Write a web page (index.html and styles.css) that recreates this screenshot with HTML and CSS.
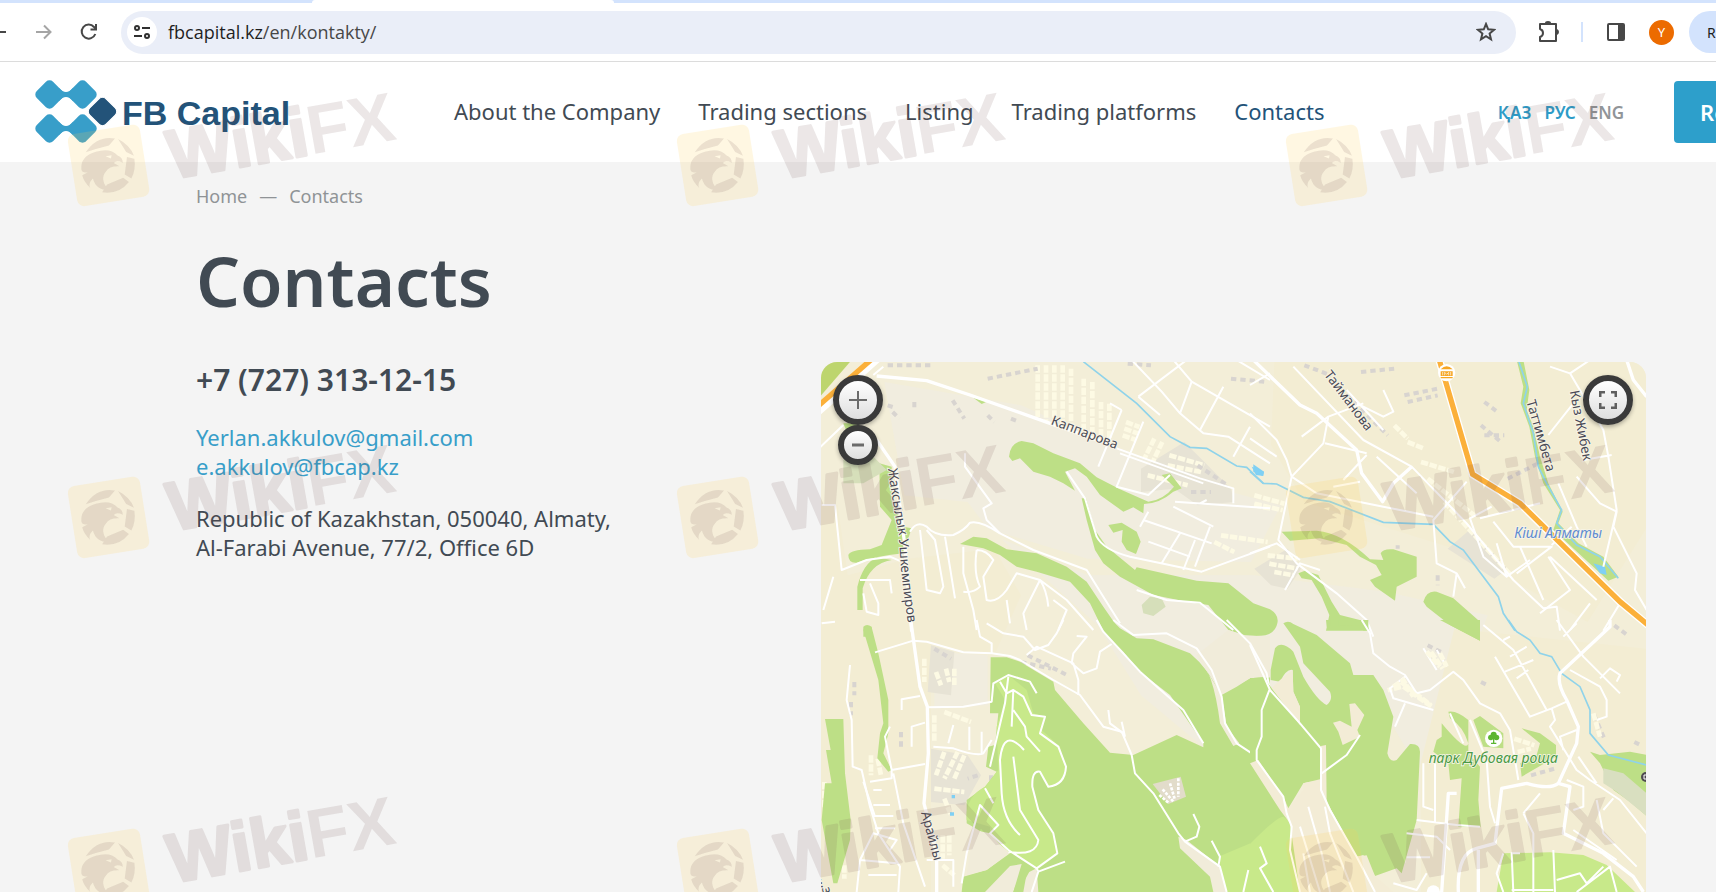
FILE: index.html
```html
<!DOCTYPE html>
<html lang="en">
<head>
  <meta charset="UTF-8" />
  <title>Contacts - FB Capital</title>
  <link rel="stylesheet" href="styles.css">
</head>
<body>
  <div class="browser">
    <div class="tabs"><span class="tab"></span></div>
    <div class="toolbar">
      <button class="tool back" aria-label="Back"><svg width="20" height="20" viewBox="0 0 20 20"><path d="M18 10H3M10 3L3 10L10 17" fill="none" stroke="#474747" stroke-width="2"/></svg></button>
      <button class="tool forward" aria-label="Forward"><svg width="20" height="20" viewBox="0 0 20 20"><path d="M2 10H16M10 3.500L16.500 10L10 16.500" fill="none" stroke="#a5a5a5" stroke-width="2"/></svg></button>
      <button class="tool reload" aria-label="Reload"><svg width="20" height="20" viewBox="0 0 20 20"><path d="M16.300 12A7 7 0 1 1 15 5L17 7.500" fill="none" stroke="#474747" stroke-width="2"/><path d="M18 2V8.500H11.500V6.500H16V2Z" fill="#474747"/></svg></button>
      <div class="address">
        <span class="site-info"><svg width="18" height="16" viewBox="0 0 18 16" fill="none" stroke="#303030" stroke-width="2"><circle cx="4" cy="4" r="2"/><path d="M9 4H17M1 12H9"/><circle cx="14" cy="12" r="2"/></svg></span>
        <span class="url">fbcapital.kz<span>/en/kontakty/</span></span>
        <button class="star" aria-label="Bookmark"><svg width="20" height="20" viewBox="0 0 20 20"><path d="M10 2L12.200 7.300L18 7.800L13.600 11.600L15 17.300L10 14.200L5 17.300L6.400 11.600L2 7.800L7.800 7.300Z" fill="none" stroke="#474747" stroke-width="2"/></svg></button>
      </div>
      <button class="tool puzzle" aria-label="Extensions"><svg width="24" height="24" viewBox="0 0 24 24"><path d="M4 4H20V21H4V17Q7 16 7 13T4 9Z" fill="none" stroke="#474747" stroke-width="2" stroke-linejoin="round"/><path d="M9 3Q9 1 12 1T15 3ZM21 9Q23 10 23 12T21 15Z" fill="#474747"/></svg></button>
      <span class="divider"></span>
      <button class="tool panel" aria-label="Side panel"><svg width="20" height="20" viewBox="0 0 20 20"><rect x="2" y="2" width="16" height="16" rx="1" fill="none" stroke="#474747" stroke-width="2"/><path d="M12 2H18V18H12Z" fill="#474747"/></svg></button>
      <span class="avatar">Y</span>
      <button class="update">R</button>
    </div>
  </div>

  <header class="header">
    <a href="#" class="logo" aria-label="FB Capital">
      <svg width="260" height="64" viewBox="0 0 260 64">
        <g fill="#389ec9">
          <rect x="3" y="3" width="23" height="23" rx="5" transform="rotate(45 14.500 14.500)"/>
          <rect x="36" y="3" width="23" height="23" rx="5" transform="rotate(45 47.500 14.500)"/>
          <rect x="3" y="37" width="23" height="23" rx="5" transform="rotate(45 14.500 48.500)"/>
          <rect x="36" y="37" width="23" height="23" rx="5" transform="rotate(45 47.500 48.500)"/>
          <path d="M24 8Q31 16 38 8V21Q31 13 24 21ZM24 42Q31 50 38 42V55Q31 47 24 55Z"/>
        </g>
        <rect x="56" y="20" width="23" height="23" rx="5" transform="rotate(45 67.500 31.500)" fill="#235379" stroke="#fff" stroke-width="1"/>
        <text x="87" y="45" class="logo-text">FB Capital</text>
      </svg>
    </a>
    <nav class="nav">
      <a href="#">About the Company</a>
      <a href="#">Trading sections</a>
      <a href="#">Listing</a>
      <a href="#">Trading platforms</a>
      <a href="#" class="active">Contacts</a>
    </nav>
    <div class="lang">
      <a href="#">ҚАЗ</a>
      <a href="#">РУС</a>
      <a href="#" class="current">ENG</a>
    </div>
    <button class="request">Re</button>
  </header>

  <main class="content">
    <div class="breadcrumbs"><a href="#">Home</a><span>—</span><span>Contacts</span></div>
    <h1>Contacts</h1>
    <div class="row">
      <div class="info">
        <div class="phone">+7 (727) 313-12-15</div>
        <div class="mails">
          <a href="mailto:Yerlan.akkulov@gmail.com">Yerlan.akkulov@gmail.com</a>
          <a href="mailto:e.akkulov@fbcap.kz">e.akkulov@fbcap.kz</a>
        </div>
        <p class="place">Republic of Kazakhstan, 050040, Almaty,<br>Al-Farabi Avenue, 77/2, Office 6D</p>
      </div>

      <div class="map">
        <svg class="map-canvas" viewBox="0 0 2475 1590" preserveAspectRatio="xMinYMin slice">
          <rect width="2475" height="1590" fill="#f3eed8"/>

          <!-- open land -->
          <g fill="#f1eddf">
            <path d="M190 60L600 130L900 260L1230 390L1380 430L1290 600L800 590L500 500L440 420L250 400Z"/>
            <path d="M540 530L800 640L1300 640L1700 690L2000 760L1930 950L1700 1100L1200 1200L960 1000L830 790Z"/>
            <path d="M10 800L130 790L190 1250L60 1250ZM340 870L500 880V1030L340 1040ZM220 1160H310V1330L250 1380Z"/>
            <path d="M1700 780L1940 1000L1900 1240L1780 1200L1600 900Z"/>
          </g>
          <!-- housing blocks -->
          <g fill="#f3edd3">
            <path d="M1360 0H2475V500L2300 780L1900 560L1450 420L1350 250Z"/>
            <path d="M1900 800L2475 860V1590H1800V1200Z"/>
            <path d="M0 430H50L80 640L260 590L520 560L600 700L520 880L330 850V1590H0Z"/>
          </g>
          <g fill="#e7e3d5">
            <path d="M960 320L1090 240L1230 380L1240 420L1130 430L1060 380L960 390ZM330 850L400 870L390 1000L320 990ZM330 1160L440 1180L480 1240L430 1330L330 1320Z"/>
            <path d="M1300 620L1400 560L1440 620L1400 680L1350 670ZM1880 560L1950 500L2060 620L2020 650Z"/>
          </g>

          <!-- building rows -->
          <g class="blocks">
            <path d="M650 10V165M675 10V180M700 10V190M725 10V200M750 20V210M788 50V220M814 60V225M840 120V235M865 125V240"/>
            <path d="M915 180L955 195M910 200L950 214M905 220L945 234M1000 230L970 290M1024 240L995 300M1045 280L1150 310M1040 310L1140 330M980 340L1100 370M1180 540L1240 570M1200 520L1340 540M1300 430L1350 440"/>
            <path d="M1300 400L1390 425M1300 425L1385 445M1340 580L1430 590M1345 605L1430 620M1360 630L1420 640M1720 190L1760 230M1760 240L1810 260M1800 300L1900 330M1870 420L2070 640M1820 350L1960 460"/>
            <path d="M310 890V960M345 930L360 970M375 920L385 960M400 920V970M340 1060V1140M370 1050L450 1080M370 1170L345 1240M410 1170L370 1250M430 1180L400 1250M340 1280L430 1290M370 1310L390 1360M365 1420V1490M385 1420V1480M365 1510L400 1540"/>
            <path d="M150 1180V1240M170 1190L180 1240M1740 960L1830 1030M1740 975L1700 985M1830 870L1865 920M2080 1130L2140 1150M2090 1170L2130 1160M10 1260V1340M70 1510V1550"/>
          </g>
          <g class="houses">
            <path d="M200 130L215 135M215 150L235 170M280 120V140M395 115L430 170M500 160L520 180M570 170L595 180M200 10H330M1230 50L1340 60M1110 390H1170M1130 310L1220 370"/>
            <path d="M1450 10L1530 40M1620 30L1720 20M1750 100L1850 80M1760 120L1850 100M1980 190L2040 240M1990 220H2050M1580 100L1700 220M1990 120L2030 150M2060 350L2160 300"/>
            <path d="M100 960V1000M90 1020V1060M240 1110V1160M340 860L390 890M620 880L740 940M600 900L690 920M470 1240L440 1250M510 1240V1270M2320 1060L2350 1130M2440 1140L2460 1150M2380 790L2420 820M1980 960L2000 970M2130 1240L2200 1220M1820 850L1860 870M1730 550V560M1850 640V670M500 50L650 20M920 5L990 10"/>
          </g>

          <!-- north-west -->
          <g transform="translate(-3 -6)">
            <g class="park">
              <path fill="#bdd56e" d="M0 0H95L0 110Z"/>
              <path d="M567 290Q570 250 605 243L640 250L700 280L780 310L830 352L900 388L985 425Q1030 420 1062 380L1025 345L1050 340L1085 385L1060 395Q1020 430 972 432L970 460L940 442L910 455L840 405L800 350L765 325L735 335L765 392L730 370L690 350L640 335L600 295L577 303Z"/>
              <path d="M785 415L798 415L825 510L860 560L945 630L950 622L1130 662L1225 670L1300 730L1350 748Q1378 765 1372 790Q1365 828 1310 828L1275 826L1225 810L1165 735L1100 725L1000 705L900 650L850 610L825 570L800 480Z"/>
              <path d="M420 552L460 530L500 535L560 568L650 580L740 620L800 665L850 740L900 812H850L810 730L750 665L650 635L590 620L540 585L490 565Z"/>
              <path d="M865 495L905 488L950 515L962 545L948 582L920 570L905 545L908 510L880 518ZM460 113L500 125L485 132Z"/>
              <path d="M178 310L215 320L215 420L250 500L275 505L250 580Q160 590 110 608Q85 610 85 585Q90 570 150 568L185 555L215 480L180 440ZM215 600Q150 610 128 685V750H112V680Q130 610 170 592ZM70 190H115L135 215H80ZM130 800Q140 790 155 800V830H130Z"/>
              <path fill="#d6dfba" d="M965 735L990 710L1025 715L1037 740L1000 768L970 760ZM70 300L140 270L200 330L130 370H70Z"/>
            </g>
            <path class="river" d="M790 5L950 130L1050 230L1110 262L1160 265L1250 318L1280 322L1330 370"/>
            <path class="water" d="M1300 313L1332 335L1328 348L1300 335Z"/>
            <g class="road">
              <path d="M70 195L0 262M5 435H45L65 630L140 600L210 590L245 605M270 515Q290 480 320 500Q345 530 400 525Q435 510 450 488Q480 480 540 520L640 570L800 630L850 710L900 790"/>
              <path d="M300 510L320 690L360 700L370 680L345 540L320 510M375 530L405 715M430 560V640L460 750L470 810M470 570Q460 640 480 680Q460 700 430 695M470 570Q500 570 520 600L490 650L500 720Q530 730 560 690L590 640L660 660L740 720L820 810"/>
              <path d="M660 660L610 760L620 810M660 660Q680 690 685 740M560 720L570 790M700 720L740 750L715 810M160 45L190 20M435 280V320L515 430L490 445L500 480L540 520M120 660H210L215 700M130 700L140 755L175 765V730L150 670M5 790L45 785M40 650L10 750"/>
              <path d="M740 335L795 415L830 530Q850 570 930 590L1145 635L1350 560M950 690L1040 720L1140 728L1240 810M905 150L835 320M970 185L890 380L985 405L1050 345M870 130L905 150M890 265L1140 355L1240 385V430M900 280L1150 370M1065 425L1350 445M1140 430L1160 420M970 480L1175 550M985 545L1110 590M1060 440L1180 500M1080 520L1025 610M1125 540L1090 630M1170 500L1125 620M985 455L960 500"/>
              <path d="M955 110L1020 165M935 0L1025 95L1080 160L1150 220L1225 230L1350 310M1060 0L1115 65L1080 160M1100 0L955 110M1115 65L1350 200M1210 80L1140 210M1290 200L1240 290M1250 0L1350 60"/>
            </g>
            <path class="road wide" d="M170 48L320 62L450 105L690 190L890 260"/>
            <path class="road wide" d="M170 240L225 320L255 560L265 700L275 815"/>
            <path class="casing" d="M-10 158L190 -20"/><path class="highway" d="M-10 142L175 -20"/>
          </g>

          <!-- north-east -->
          <g transform="translate(1287 -6)">
            <g class="park">
              <path d="M95 515L200 512Q280 520 360 598L400 600L392 580Q400 565 430 568L500 590V650L440 680L435 722L375 680L360 660L395 645L378 615L330 590L290 555L210 535L120 542Z"/>
              <path d="M145 640L165 632L205 645L245 725L270 765L350 785L358 812H228L238 765L215 710L185 660L155 655ZM520 725Q530 690 560 695L610 715L690 785V842L600 795L530 740Z"/>
              <path d="M800 0H820L838 90L830 150L850 200L870 290L895 370L938 455L925 490L985 550L1060 590L1105 650L1075 662L910 510L930 450L880 370L855 290L838 200L812 130L820 80Z"/>
            </g>
            <path class="river" d="M0 335L40 370L80 372L160 412L240 425L400 487L550 493L600 545L640 570L700 650L745 710L760 760L795 812M805 0L832 80L820 130L850 220L865 320L890 370L935 450L920 490L980 555L1050 590L1105 655"/>
            <path class="water" d="M5 320L42 335L40 348L18 345ZM1030 610L1065 620L1070 645L1050 640Z"/>
            <g class="road">
              <path d="M0 75L60 40M0 160L80 240L110 300L125 350L85 540L140 610L260 700L350 780L370 830M0 235L80 290M125 350L220 250L235 170L340 130M130 20L340 240L485 320L650 490L790 660L880 745L920 740L930 812M125 350L200 400L400 440L550 470M290 90L400 210M400 90L430 155L400 170L320 130M155 230L235 170M225 250L350 280M350 285L280 360M380 290L500 400M250 380L330 365"/>
              <path d="M0 580L80 550L150 600M105 690L150 610L210 630M650 365L550 480L560 610L620 640L645 685M620 640L610 710M725 440L660 475L700 590L770 650L840 600M690 475L870 430M730 485L790 560L905 560L800 640M895 590L960 690L870 760M905 555L965 500M900 590L1040 720M810 560L880 720M770 650L740 550"/>
              <path d="M960 40L1060 210L1075 290L1100 450L1060 620M895 225L970 130M900 20L960 40L1020 0M925 370L980 500L1010 560M980 350L1050 430L1100 455L1090 500L1160 640L1155 690L1190 750M1000 300L1085 285M1020 730L960 810M1110 730L1060 812"/>
            </g>
            <path class="road wide" d="M10 0L150 135L200 160L320 270L335 340L398 425L430 370L485 320M1130 0L1150 60L1190 110"/>
            <path class="casing" d="M568 0L668 343L810 430L1110 725L1200 800"/>
            <path class="highway" d="M568 0L668 343L810 430L1110 725L1200 800"/>
            <circle cx="590" cy="38" r="26" fill="#fff"/>
            <path d="M572 28Q590 10 608 28ZM572 34H608V48H572ZM572 51H608V55H572Z" fill="#f6a623"/>
            <path d="M578 36V46M584 46V37L590 43L596 37V46M602 36V46" fill="none" stroke="#fff" stroke-width="2"/>
          </g>

          <!-- south-west -->
          <g transform="translate(-3 774)">
            <g class="park">
              <path d="M845 0H875L900 25L950 55L1000 58L1110 100Q1170 150 1200 225L1290 175L1350 172V816H425L430 770L500 750L570 700L540 670L510 650L440 610V540L495 500L530 455L498 440L505 380L525 375L535 280H510L512 112H560L600 125L700 185L705 210L790 310L870 398L940 405L1070 345L1150 382L1150 370L1050 225L960 155L910 95L850 35Z"/>
              <path d="M130 30Q135 12 155 22L175 100L205 240V340L190 400L215 450L205 455L172 415L180 340L190 310L175 180ZM15 297H70L75 460L92 600L90 660L52 790L40 790L5 600L15 490H35L18 390H32Z"/>
              <g class="golf">
                <path d="M525 190L565 165L620 210L640 280L675 290L665 330L720 380L738 450Q730 500 685 500L660 455H640L640 510L655 570L700 640L712 700L650 745L560 690L510 650V620L440 600Q435 530 495 500L535 450L530 320L555 240Z"/>
                <path d="M1195 710L1350 645V816H1215L1205 750Z"/>
              </g>
              <g fill="#f1ecda">
                <path d="M1205 225L1170 155L1130 105L1225 30L1275 47L1350 48V172L1290 175L1250 200ZM1130 105Q1180 150 1200 310L1240 378L1258 370L1220 320L1205 225ZM1290 432L1312 418L1350 460V515L1300 450ZM1075 650L1100 660L1200 740L1220 816H1180L1170 770L1080 685Z"/>
                <path d="M495 816L570 738L605 732L580 816ZM620 760L650 745L655 816H610ZM460 630L510 640L545 680L565 700L500 750L440 765Z"/>
              </g>
              <path fill="#e2dcca" d="M998 492L1082 470L1098 530L1045 552Z"/>
            </g>
            <path d="M1028 508L1060 545M1018 525L1045 548M1075 475V530M1050 490L1065 540" stroke="#fff" stroke-width="8" stroke-dasharray="9 4"/>
            <path class="water" d="M395 525H405V535H395ZM390 577H402V587H390Z"/>
            <g class="road">
              <path d="M165 97L280 62L320 65L430 97L515 100L570 108L600 120L700 180L780 225L850 320L905 335L935 405L945 460L1000 520L1075 640L1095 665L1200 740L1220 816M90 135L80 240L95 300L98 440L125 450L150 560L175 640L240 740L235 816M320 262L430 260L515 245L520 190L565 165L630 185L650 220M340 380L400 385Q470 410 490 400L515 360M245 270V238L300 228M215 450L315 432M150 485L215 475V450L195 350L210 320M220 460L250 610L315 800M275 380V320L315 308"/>
              <path d="M565 170L555 250L510 440M540 185L560 220L580 210L610 230L635 285L675 290L660 340L715 380L738 440Q735 495 685 500L660 455Q635 450 637 500L655 570L700 640L712 700L650 745L565 690L510 640L535 615L480 555L440 700L425 790M580 210L575 320M580 270L615 320L620 350L660 395M612 390Q550 320 540 420L545 520Q550 600 600 645M580 410L600 570L655 660Q650 710 565 695M495 505L520 550M650 745L655 755L735 725M655 755L635 816"/>
              <path d="M160 510H185M160 555H210M160 588H220M165 625H225M130 485L165 590M145 765H230M120 720L160 640L230 660L210 690M110 816L120 720L230 730M320 720H400V800M400 315L385 370M448 320V390M485 335V400M500 10L550 40L610 50L645 90L685 75L710 40L730 0M470 0L480 50L515 70V100M620 105L650 80L760 130L775 180V225M770 48L800 50L760 100L755 130L790 160L830 145L840 95L875 72M865 270L870 310L910 340M905 305L915 350"/>
              <path d="M830 0L850 35L960 155L1090 270L1150 370M880 0L940 45L1040 40L1130 85L1175 150L1205 230L1215 310L1250 370L1310 410L1350 460M1220 0L1290 70L1340 160L1350 210L1330 260L1315 415M1120 582L1138 620L1130 650L1095 665M1175 662L1200 710L1195 740M1285 750L1270 816M1320 680L1340 730L1325 745L1350 790"/>
            </g>
            <path class="road wide" d="M272 0L300 200L322 260L325 400L312 550L350 700V816"/>
            <path d="M615 745L585 800L580 816H595L628 755Z" class="park"/>
          </g>

          <!-- south-east -->
          <g transform="translate(1287 774)">
            <g class="park">
              <path d="M0 175L40 172L65 205L150 310L150 260L130 215L128 150Q110 145 90 185L62 180V150L75 85Q95 60 130 95L160 170Q200 240 230 255Q250 240 240 215L160 130L150 80L100 10Q115 0 130 12L200 45L300 130L310 165H370L400 210L430 290L412 400Q420 430 440 420L480 372Q510 370 510 395L500 600L455 760L440 745L375 768L340 705L320 710L230 545L210 478L160 490L115 565L125 610L150 816H0Z"/>
              <path d="M65 205L150 310L215 380L225 470L215 485H0V175L40 172ZM575 310Q650 400 655 370V400L690 440L685 540L692 620H625L635 475L600 480L595 430L550 395L560 360L575 350ZM595 275Q620 270 655 300V370Q640 320 600 295ZM670 300L690 288L760 340V385L700 380ZM815 325L870 340L918 375V410L815 470L810 430L860 405L870 370ZM570 0H690V62ZM1020 395L1050 405L1140 395L1190 405V588L1140 545L1090 510L1050 430ZM228 0H242V20H230ZM265 0H355V30L340 32V16L265 18Z"/>
              <g class="golf"><path d="M0 672Q80 590 100 590L125 610L120 690L150 816H0ZM760 700L900 697L1000 705L1070 735L1155 816H740Z"/></g>
              <g fill="#f3ecd6">
                <path d="M65 205L90 180L128 150L130 215L150 260V315ZM160 490L210 478L232 550L320 710L350 706L375 768L430 816H150L120 610L90 570L0 430L25 420L100 530L115 565L160 510ZM213 378L228 375L230 545L213 500ZM249 308L270 302L305 320L298 252L315 250L343 285L322 330L330 350L278 375L265 335Z"/>
              </g>
              <path fill="#d9dfc0" d="M1060 445L1120 460L1190 520V588L1100 515L1060 490Z"/>
            </g>
            <path class="river" d="M775 0L800 35L840 60L870 100L905 110L935 160L990 200L1020 270V340L1075 405L1190 435"/>
            <g class="road">
              <path d="M0 75L60 210L150 310L213 385V510L240 570L320 710L375 816M60 205L35 270V350L20 390V420L100 530L110 580L125 620L120 690L150 816M330 345L290 405L215 460M335 0L360 40L370 100L420 140L465 165L500 220L540 210L610 155L640 180L690 250L750 280L780 330L805 480M465 170L420 205L430 235L550 270M465 250L435 320M600 280L640 370M660 300L710 420L720 560L735 610M520 430V560L550 570M555 430V605M500 600L620 615L690 620M470 640L560 650L600 690M470 712H540"/>
              <path d="M700 15L790 90L890 270M735 110L840 290L905 265L950 245M765 155L850 120M780 110L830 80M760 60L780 50M800 175L835 150M905 265L915 300L900 320L980 450L1020 480L1110 540L1190 640M920 0L1000 110L1110 220M940 50L980 10M960 150L1050 200L1070 240V290L1040 300M1050 175L1080 145L1110 165L1100 185M980 330L930 350L940 390M985 410L1040 490M950 480L1000 500V560L970 570M1040 540L1060 640L1160 740M1060 570L1090 535M820 580L870 520M820 580L850 640L850 816M970 630L1100 720M790 816L785 700H810M910 690L915 816M920 780L990 760L1010 790L1060 740M980 816L1080 740L1100 816M150 620L210 816M175 560L215 700L240 816M225 560L240 640L310 816M160 700L180 816M785 810H910M430 790L500 810L530 760M30 680L50 730L30 745L70 816M760 816L740 760L760 700"/>
              <path d="M520 85L560 150M560 90L590 140"/>
            </g>
            <g class="blocks"><path d="M530 95L570 140M570 100L590 140M430 200L460 180L490 230M460 200L545 260M1030 280L1050 350"/></g>
            <g class="road wide">
              <path d="M1080 0V20L930 160Q920 190 950 240L985 320L980 370L925 490Q900 510 830 490L755 505L735 670L680 685Q620 700 625 816M620 520H595L575 816M925 490L960 500L940 640L1060 700L1150 770L1180 816M685 690V816"/>
            </g>
            <circle cx="550" cy="816" r="20" fill="#fff"/>
            <circle cx="731" cy="355" r="26" fill="#fff"/>
            <path d="M723 361Q714 361 714 352Q714 345 722 344Q722 335 731 335Q740 335 740 344Q748 345 748 352Q748 361 739 361Q735 361 733 358V368H739V372H723V368H729V358Q727 361 723 361Z" fill="#5cb531"/>
            <circle cx="1188" cy="471" r="15" fill="#4e4a50"/><path d="M1190 465H1182V477H1190" fill="none" stroke="#fff" stroke-width="3"/>
          </g>

          <path id="street" d="M201 320Q215 430 234 520Q238 640 262 790" fill="none"/>
          <g class="labels">
            <text transform="translate(688 186) rotate(21)">Каппарова</text>
            <text><textPath href="#street">Жаксылык Ушкемпиров</textPath></text>
            <text transform="translate(1508 38) rotate(53)">Тайманова</text>
            <text transform="translate(2116 118) rotate(74)">Таттимбета</text>
            <text transform="translate(2246 88) rotate(79)">Кыз Жибек</text>
            <text transform="translate(300 1352) rotate(75)">Арайлы</text>
            <text transform="translate(-6 1548) rotate(75)">...за</text>
            <text x="2080" y="527" class="river-name">Кіші Алматы</text>
            <text x="1823" y="1202" class="park-name">парк Дубовая роща</text>
          </g>
        </svg>
        <div class="zoom">
          <button class="zoom-in" aria-label="Zoom in"><svg width="18" height="18"><path d="M9 0V18M0 9H18" stroke="#6b6b6b" stroke-width="2"/></svg></button>
          <button class="zoom-out" aria-label="Zoom out"><svg width="12" height="12"><path d="M0 6H12" stroke="#6b6b6b" stroke-width="3"/></svg></button>
        </div>
        <button class="fullscreen" aria-label="Full screen"><svg width="18" height="18"><path d="M1 6V1H6M12 1H17V6M17 12V17H12M6 17H1V12" fill="none" stroke="#5f5f5f" stroke-width="3"/></svg></button>
      </div>
    </div>
  </main>

  <!-- repeated brand mark over the whole page -->
  <svg class="watermark" aria-hidden="true">
    <defs>
      <pattern id="mark" width="609" height="352" patternUnits="userSpaceOnUse" y="60">
        <g transform="translate(108 105) rotate(-9)">
          <rect x="-36" y="-36" width="73" height="73" rx="7" fill="#fad050" opacity=".17"/>
          <g opacity=".13" fill="#664545">
            <path d="M-20 -16Q-6 -31 11 -25L4 -19Q-8 -18 -20 -16ZM14 -24Q25 -16 27 -5L20 -10ZM27 -2Q27 9 21 17L15 12L20 -5ZM18 20Q6 31 -10 26L-4 19L13 15Z"/>
            <path d="M-27 0Q-26 -13 -10 -15Q5 -17 11 -8Q16 -5 15 0Q9 -4 6 -1L11 3Q1 1 -3 6Q-11 13 -3 25Q-16 23 -17 11Q-23 15 -21 20Q-27 12 -27 6L-21 4Q-27 4 -27 0ZM-1 -9L4 -6L5 -9Z" fill-rule="evenodd"/>
          </g>
        </g>
        <g transform="translate(172 119) rotate(-10)" opacity=".13">
          <text class="mark-text"><tspan class="mark-round">Wiki</tspan>FX</text>
        </g>
      </pattern>
    </defs>
    <rect width="100%" height="100%" fill="url(#mark)"/>
  </svg>
</body>
</html>
```
FILE: styles.css
```css
* {
  box-sizing: border-box;
}
body {
  margin: 0;
  height: 100vh;
  display: flex;
  flex-direction: column;
  overflow: hidden;
  position: relative;
  background: #f4f4f4;
  color: #414a53;
  font-family: "Noto Sans", "Open Sans", sans-serif;
  font-size: 22px;
}
a {
  color: inherit;
  text-decoration: none;
}
button {
  font-family: inherit;
  border: none;
  padding: 0;
  cursor: pointer;
}
svg {
  display: block;
}

/* browser bar */
.browser {
  flex: none;
  background: #fff;
  border-bottom: 1px solid #dcdcdc;
}
.tabs {
  height: 3px;
  background: #d3e3fd;
  padding-left: 312px;
}
.tab {
  display: block;
  width: 302px;
  height: 3px;
  background: #fff;
  border-radius: 6px 6px 0 0;
}
.toolbar {
  height: 58px;
  display: flex;
  align-items: center;
  overflow: hidden;
}
.tool {
  flex: none;
  background: none;
}
.back {
  margin-left: -12px;
}
.forward {
  margin-left: 26px;
}
.reload {
  margin: 0 22px 0 25px;
}
.address {
  flex: 1;
  height: 43px;
  display: flex;
  align-items: center;
  background: #eaeef8;
  border-radius: 22px;
  padding: 0 20px 0 6px;
}
.site-info {
  width: 30px;
  height: 30px;
  display: flex;
  align-items: center;
  justify-content: center;
  background: #fff;
  border-radius: 50%;
}
.url {
  flex: 1;
  margin-left: 11px;
  font-family: "Open Sans", sans-serif;
  font-size: 18px;
  color: #1f1f1f;
}
.url span {
  color: #474747;
}
.star {
  background: none;
}
.puzzle {
  margin-left: 20px;
}
.divider {
  flex: none;
  width: 2px;
  height: 20px;
  margin: 0 23px 0 21px;
  background: #d3e3fd;
}
.avatar {
  flex: none;
  width: 25px;
  height: 25px;
  margin: 0 15px 0 23px;
  border-radius: 50%;
  background: #ec6b00;
  color: #fff;
  font-size: 13px;
  line-height: 25px;
  text-align: center;
}
.update {
  flex: none;
  width: 80px;
  height: 42px;
  margin-right: -53px;
  padding-left: 18px;
  border-radius: 21px;
  background: #d3e3fd;
  color: #1f1f1f;
  font-size: 14px;
  text-align: left;
}

/* site header */
.header {
  flex: none;
  height: 100px;
  display: flex;
  align-items: center;
  padding-left: 35px;
  background: #fff;
  overflow: hidden;
}
.logo-text {
  font-family: "Liberation Sans", sans-serif;
  font-size: 34px;
  font-weight: bold;
  fill: #235379;
}
.nav {
  display: flex;
  gap: 38px;
  margin-left: 159px;
  padding-bottom: 2px;
  white-space: nowrap;
}
.nav .active {
  color: #235379;
}
.lang {
  display: flex;
  gap: 13px;
  margin-left: auto;
  font-size: 17px;
  font-weight: 600;
  color: #2d9bc7;
}
.lang .current {
  color: #919598;
}
.request {
  flex: none;
  width: 140px;
  height: 62px;
  margin: 0 -98px 0 50px;
  padding-left: 26px;
  border-radius: 4px;
  background: #2d9fcb;
  color: #fff;
  font-size: 22px;
  font-weight: 600;
  text-align: left;
}

/* page */
.content {
  flex: 1;
  min-height: 0;
  display: flex;
  flex-direction: column;
  padding: 21px 70px 0 196px;
}
.breadcrumbs {
  display: flex;
  gap: 12px;
  font-size: 18px;
  line-height: 26px;
  color: #8f9396;
}
h1 {
  margin: 23px 0 34px;
  font-size: 69px;
  line-height: 96px;
  font-weight: 600;
}
.row {
  flex: 1;
  min-height: 0;
  display: grid;
  grid-template-columns: 25fr 33fr;
}
.info {
  line-height: 29px;
}
.phone {
  font-size: 30px;
  line-height: 36px;
  font-weight: 600;
}
.mails {
  display: flex;
  flex-direction: column;
  align-items: flex-start;
  margin: 25px 0 23px;
  color: #389ec9;
}
.place {
  margin: 0;
}

/* map */
.map {
  position: relative;
  overflow: hidden;
  border-radius: 16px 16px 0 0;
}
.map-canvas {
  width: 100%;
  height: 100%;
}
.park {
  fill: #bddf86;
}
.golf {
  fill: #c8e98a;
}
.water {
  fill: #7fd0f4;
}
.river {
  fill: none;
  stroke: #8fd3ea;
  stroke-width: 5;
}
.road {
  fill: none;
  stroke: #fff;
  stroke-width: 6;
  stroke-linejoin: round;
}
.wide {
  stroke-width: 10;
}
.casing {
  fill: none;
  stroke: #fff;
  stroke-width: 24;
}
.highway {
  fill: none;
  stroke: #fbb03a;
  stroke-width: 16;
}
.blocks {
  fill: none;
  stroke: #fdfae4;
  stroke-width: 14;
  stroke-dasharray: 22 5;
}
.houses {
  fill: none;
  stroke: #d8d4d0;
  stroke-width: 12;
  stroke-dasharray: 16 12;
}
.labels {
  font-size: 40px;
  fill: #4a4a55;
  stroke: #f8f5e8;
  stroke-width: 5;
  paint-order: stroke;
}
.river-name {
  font-size: 42px;
  fill: #5f8bd0;
  font-style: italic;
}
.park-name {
  font-size: 42px;
  fill: #4a9a45;
  font-style: italic;
}
.zoom {
  position: absolute;
  top: 13px;
  left: 12px;
  display: flex;
  flex-direction: column;
  align-items: center;
}
.zoom button,
.fullscreen {
  display: flex;
  align-items: center;
  justify-content: center;
  width: 50px;
  height: 50px;
  border: 6px solid #3a3a3a;
  border-radius: 50%;
  background: linear-gradient(#fff, #dedede);
  box-shadow: 0 2px 4px rgba(0,0,0,0.3);
}
.zoom .zoom-out {
  width: 40px;
  height: 40px;
}
.fullscreen {
  position: absolute;
  top: 13px;
  right: 13px;
}

.watermark {
  position: absolute;
  top: 0;
  left: 0;
  width: 100%;
  height: 100%;
  pointer-events: none;
}
.mark-text {
  font-family: "Liberation Sans", sans-serif;
  font-size: 69px;
  font-weight: bold;
  fill: #664545;
}
.mark-round {
  stroke: #664545;
  stroke-width: 3;
  stroke-linejoin: round;
}
```
